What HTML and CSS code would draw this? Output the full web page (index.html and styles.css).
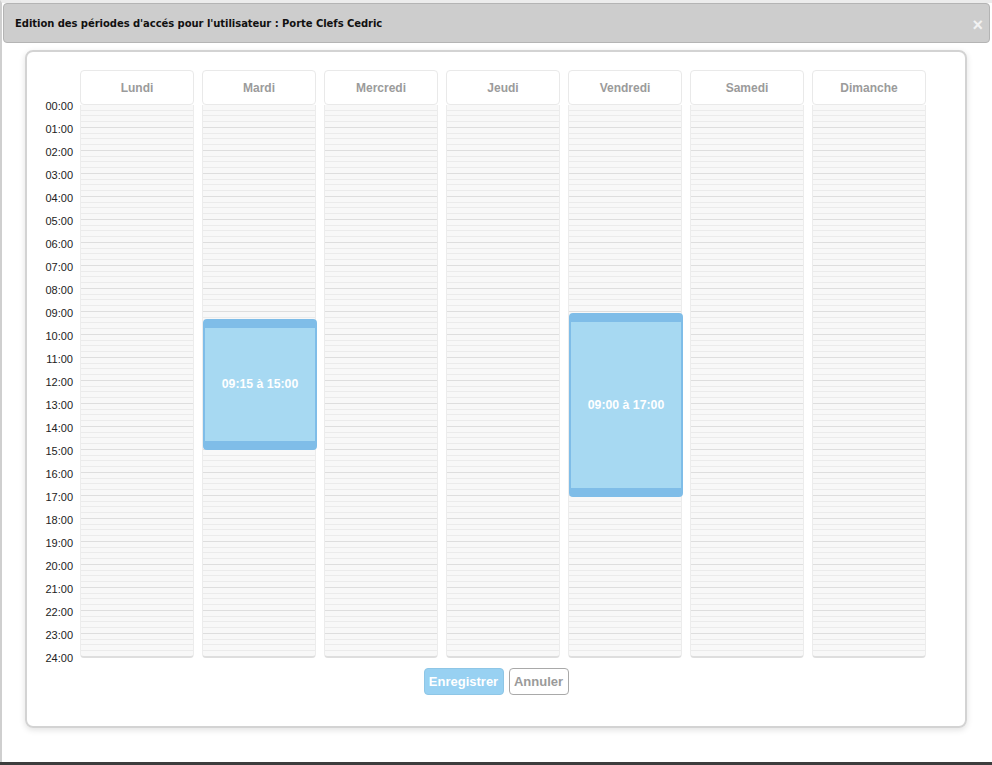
FILE: index.html
```html
<!DOCTYPE html>
<html lang="fr">
<head>
<meta charset="utf-8">
<title>Edition des périodes d'accés</title>
<link rel="stylesheet" href="styles.css">
</head>
<body>
<div class="dialog">
  <div class="titlebar">
    <span class="title">Edition des périodes d'accés pour l'utilisateur : Porte Clefs Cedric</span>
    <span class="close">×</span>
  </div>
  <div class="panel">
    <div class="calendar">
      <div class="times">
        <div class="time">00:00</div><div class="time">01:00</div><div class="time">02:00</div><div class="time">03:00</div><div class="time">04:00</div>
        <div class="time">05:00</div><div class="time">06:00</div><div class="time">07:00</div><div class="time">08:00</div><div class="time">09:00</div>
        <div class="time">10:00</div><div class="time">11:00</div><div class="time">12:00</div><div class="time">13:00</div><div class="time">14:00</div>
        <div class="time">15:00</div><div class="time">16:00</div><div class="time">17:00</div><div class="time">18:00</div><div class="time">19:00</div>
        <div class="time">20:00</div><div class="time">21:00</div><div class="time">22:00</div><div class="time">23:00</div><div class="time">24:00</div>
      </div>
      <div class="days">
        <div class="day"><div class="day-head">Lundi</div><div class="day-body"></div></div>
        <div class="day"><div class="day-head">Mardi</div><div class="day-body">
          <div class="event" style="top:213.75px;height:131.25px"><span>09:15 à 15:00</span></div>
        </div></div>
        <div class="day"><div class="day-head">Mercredi</div><div class="day-body"></div></div>
        <div class="day"><div class="day-head">Jeudi</div><div class="day-body"></div></div>
        <div class="day"><div class="day-head">Vendredi</div><div class="day-body">
          <div class="event" style="top:207.5px;height:184px"><span>09:00 à 17:00</span></div>
        </div></div>
        <div class="day"><div class="day-head">Samedi</div><div class="day-body"></div></div>
        <div class="day"><div class="day-head">Dimanche</div><div class="day-body"></div></div>
      </div>
    </div>
    <div class="actions">
      <button class="btn btn-primary">Enregistrer</button>
      <button class="btn btn-default">Annuler</button>
    </div>
  </div>
</div>
<div class="taskbar"></div>
</body>
</html>
```

FILE: styles.css
```css
html, body {
  margin: 0;
  padding: 0;
  background: #ffffff;
}
body {
  width: 992px;
  height: 765px;
  overflow: hidden;
  font-family: "Liberation Sans", Arial, sans-serif;
}
.dialog {
  height: 762px;
  box-sizing: border-box;
  border-left: 2px solid #cfcfcf;
  background: #ffffff;
  border-top: 3px solid #ececec;
  display: flex;
  flex-direction: column;
}
.titlebar {
  margin-left: 1px;
  width: 987px;
  height: 40px;
  box-sizing: border-box;
  background: #cdcdcd;
  border: 1px solid #b4b4b4;
  border-radius: 4px;
  display: flex;
  align-items: center;
  justify-content: space-between;
  padding: 1px 6px 0 11px;
}
.title {
  font-family: "DejaVu Sans", Verdana, sans-serif;
  font-weight: bold;
  font-size: 10px;
  color: #111111;
  letter-spacing: -0.05px;
}
.close {
  font-family: "Liberation Sans", Arial, sans-serif;
  font-size: 18px;
  font-weight: bold;
  color: #f2f2f2;
  line-height: 1;
  padding-top: 2px;
}
.panel {
  margin: 7px 0 0 23px;
  width: 942px;
  height: 678px;
  box-sizing: border-box;
  border: 2px solid #d3d3d3;
  border-radius: 8px;
  box-shadow: 0 2px 6px rgba(0, 0, 0, 0.12);
  padding-top: 18px;
  display: flex;
  flex-direction: column;
}
.calendar {
  display: flex;
  align-items: flex-start;
  height: 588px;
}
.times {
  width: 46px;
  margin-right: 7px;
  padding-top: 24.5px;
  display: flex;
  flex-direction: column;
}
.time {
  height: 23px;
  line-height: 23px;
  font-size: 11px;
  color: #222222;
  text-align: right;
}
.days {
  display: flex;
  gap: 8px;
}
.day {
  width: 114px;
  display: flex;
  flex-direction: column;
}
.day-head {
  height: 35px;
  box-sizing: border-box;
  border: 1px solid #e9e9e9;
  border-radius: 4px;
  background: #ffffff;
  display: flex;
  align-items: center;
  justify-content: center;
  font-size: 12px;
  font-weight: bold;
  color: #9b9b9b;
}
.day-body {
  position: relative;
  height: 553px;
  box-sizing: border-box;
  border: 1px solid #ececec;
  border-top: 0;
  border-bottom: 2px solid #dedede;
  border-radius: 0 0 4px 4px;
  background-color: #f8f8f8;
  background-image:
    linear-gradient(to bottom, transparent 22px, #dedede 22px, #dedede 23px),
    repeating-linear-gradient(to bottom, transparent 0, transparent 4.75px, #ebebeb 4.75px, #ebebeb 5.75px);
  background-size: 100% 23px, 100% 23px;
  background-repeat: repeat-y;
}
.event {
  position: absolute;
  left: 0;
  right: -2px;
  box-sizing: border-box;
  background: #a7d9f2;
  border: 2px solid #7fbde8;
  border-top-width: 9px;
  border-bottom-width: 9px;
  border-radius: 4px;
  display: flex;
  align-items: center;
  justify-content: center;
}
.event span {
  font-size: 12.3px;
  font-weight: bold;
  color: #ffffff;
}
.actions {
  display: flex;
  justify-content: center;
  gap: 5px;
  margin-top: 10px;
}
.btn {
  font-family: "Liberation Sans", Arial, sans-serif;
  font-size: 13px;
  font-weight: bold;
  height: 27px;
  box-sizing: border-box;
  border-radius: 4px;
  padding: 0 4px;
  cursor: pointer;
}
.btn-primary {
  background: #98d1f2;
  border: 1px solid #8ec6e6;
  color: #ffffff;
  width: 80px;
}
.btn-default {
  background: #ffffff;
  border: 1px solid #a9a9a9;
  color: #9a9a9a;
  width: 60px;
}
.taskbar {
  height: 3px;
  background: #3d3d3d;
}
```
